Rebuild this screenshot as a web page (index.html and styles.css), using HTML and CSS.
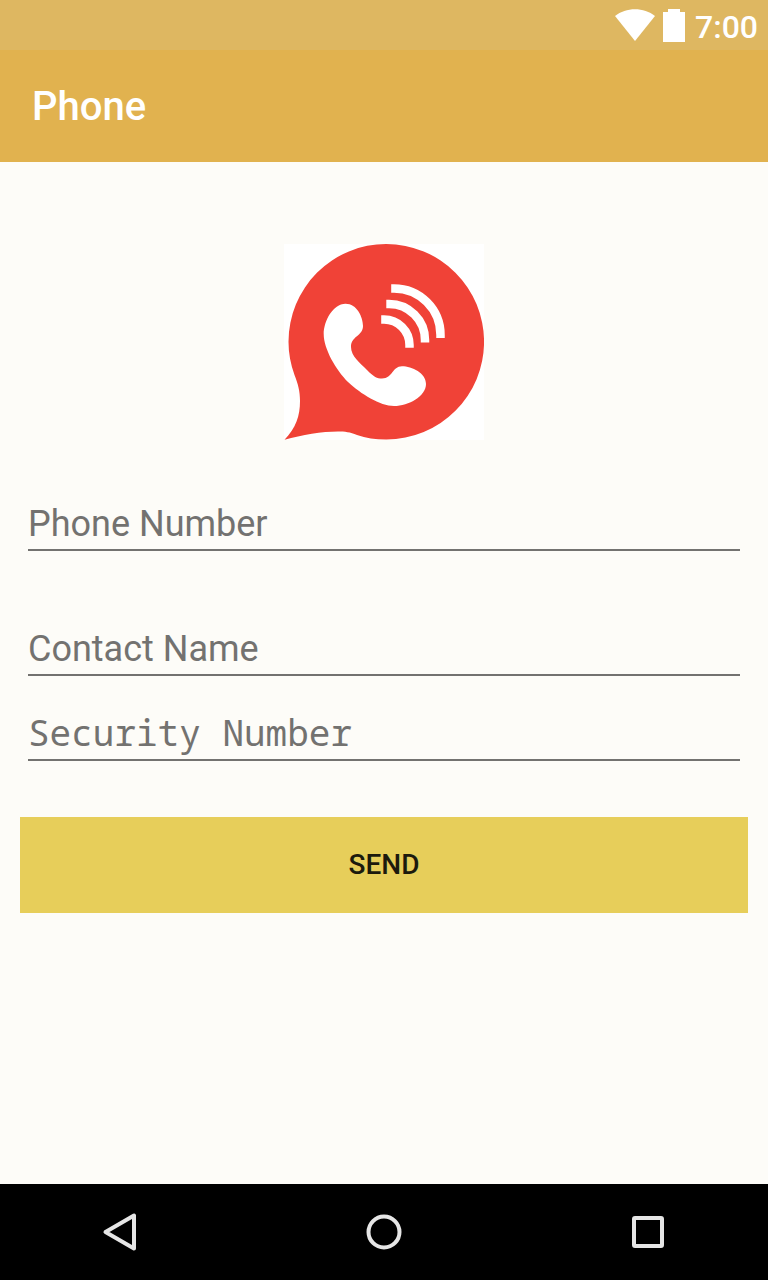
FILE: index.html
```html
<!DOCTYPE html>
<html lang="en">
<head>
<meta charset="utf-8">
<meta name="viewport" content="width=device-width, initial-scale=1">
<title>Phone</title>
<link rel="stylesheet" href="styles.css">
</head>
<body class="screen">
  <header>
    <div class="status-bar">
      <svg class="wifi" viewBox="0 0 40 32" aria-hidden="true"><path d="M0 7C11-2 29-2 40 7L20 32Z"/></svg>
      <svg class="battery" viewBox="0 0 22 34" aria-hidden="true"><path d="M5 1H17V4H22V34H0V4H5Z"/></svg>
      <span class="clock">7:00</span>
    </div>
    <div class="app-bar"><h1 class="title">Phone</h1></div>
  </header>
  <main class="content">
    <svg class="logo" viewBox="0 0 200 196" role="img" aria-label="Phone call">
      <path class="bubble" d="M102.300 0A97.700 97.700 0 1 1 102.300 195.500C91 195.500 82 194 73 191C66 188 61 187.500 54 187.500C38 187.500 18 191 .5 195.700C12 184 16 172 16 157C16 147 14 140 10.500 131C6.500 120 4.500 109 4.500 97.700A97.700 97.700 0 0 1 102.300 0Z"/>
      <path class="handset" d="M39.700 90C39.700 77 49 59.700 61.500 59.700C73 59.700 79 73 79 82C79 92 67 92 67 103C67 112 76 119 83 126C90 133 93 134.500 98 134.500C109 134.500 108 122.300 118 122.300C128 122.300 142 129 142 140C142 152 125 162 110 162C96 162 77 150 64 138C52 126 39.700 105 39.700 90Z"/>
      <path class="waves" d="M97.200 75.500H100A25.500 25.500 0 0 1 125.500 101V103.700M102.300 60H105A36 36 0 0 1 141 96V98.500M107.200 44.500H110A46.500 46.500 0 0 1 156.500 91V94"/>
    </svg>
    <form class="form">
      <input class="field field-first" type="tel" placeholder="Phone Number" aria-label="Phone Number">
      <input class="field" type="text" placeholder="Contact Name" aria-label="Contact Name">
      <input class="field field-secret" type="password" placeholder="Security Number" aria-label="Security Number">
      <button class="send" type="button">SEND</button>
    </form>
  </main>
  <nav class="nav-bar" aria-label="System">
    <button class="nav-button" type="button" aria-label="Back"><svg class="nav-icon" viewBox="0 0 40 40"><path d="M5.500 20L34 3.500V36.500Z"/></svg></button>
    <button class="nav-button" type="button" aria-label="Home"><svg class="nav-icon" viewBox="0 0 40 40"><circle cx="20" cy="20" r="15.500"/></svg></button>
    <button class="nav-button" type="button" aria-label="Recent apps"><svg class="nav-icon" viewBox="0 0 40 40"><rect x="6" y="6" width="28" height="28" rx="1"/></svg></button>
  </nav>
</body>
</html>
```
FILE: styles.css
```css
* { box-sizing: border-box; }

.screen {
  display: flex;
  flex-direction: column;
  min-height: 100vh;
  margin: 0;
  background: #fdfcf8;
  font-family: Roboto, sans-serif;
}

.status-bar {
  display: flex;
  align-items: center;
  justify-content: flex-end;
  gap: 8px;
  height: 50px;
  padding-right: 10px;
  background: #deb761;
  color: #fff;
}

.wifi { width: 40px; height: 32px; fill: #fff; }
.battery { width: 22px; height: 34px; fill: #fff; }
.clock { padding: 4px 0 0 2px; font-size: 32px; font-weight: 500; line-height: 40px; }

.app-bar {
  display: flex;
  align-items: center;
  height: 112px;
  padding: 2px 32px 0;
  background: #e1b24f;
}

.title { margin: 0; color: #fff; font-size: 40px; font-weight: 500; line-height: 48px; }

.content {
  display: flex;
  flex: 1;
  flex-direction: column;
  align-items: center;
  padding: 82px 20px 20px;
}

.logo { width: 200px; height: 196px; background: #fff; }
.bubble { fill: #f04237; }
.handset { fill: #fff; }
.waves { fill: none; stroke: #fff; stroke-width: 8.500; }

.form {
  display: flex;
  flex-direction: column;
  align-self: stretch;
  margin-top: 56px;
}

.field {
  height: 55px;
  margin: 0 8px 30px;
  padding: 2px 0 0;
  border: 0;
  border-bottom: 2px solid #737270;
  border-radius: 0;
  outline: none;
  background: transparent;
  color: #222;
  font-family: Roboto, sans-serif;
  font-size: 36px;
}

.field::placeholder { color: #737270; opacity: 1; }
.field-first { margin-bottom: 70px; }
.field-secret {
  margin-bottom: 56px;
  padding-top: 0;
  font-family: "Noto Sans Mono", "DejaVu Sans Mono", monospace;
}

.send {
  height: 96px;
  padding: 0 0 2px;
  border: 0;
  background: #e7ce5a;
  color: #1c1a0d;
  font-family: Roboto, sans-serif;
  font-size: 28px;
  font-weight: 500;
}

.nav-bar {
  display: flex;
  justify-content: space-between;
  height: 96px;
  padding: 0 100px;
  background: #000;
}

.nav-button { padding: 0; border: 0; background: none; }
.nav-icon {
  display: block;
  width: 40px;
  height: 40px;
  fill: none;
  stroke: #e6e6e6;
  stroke-width: 4;
  stroke-linejoin: round;
}
```
